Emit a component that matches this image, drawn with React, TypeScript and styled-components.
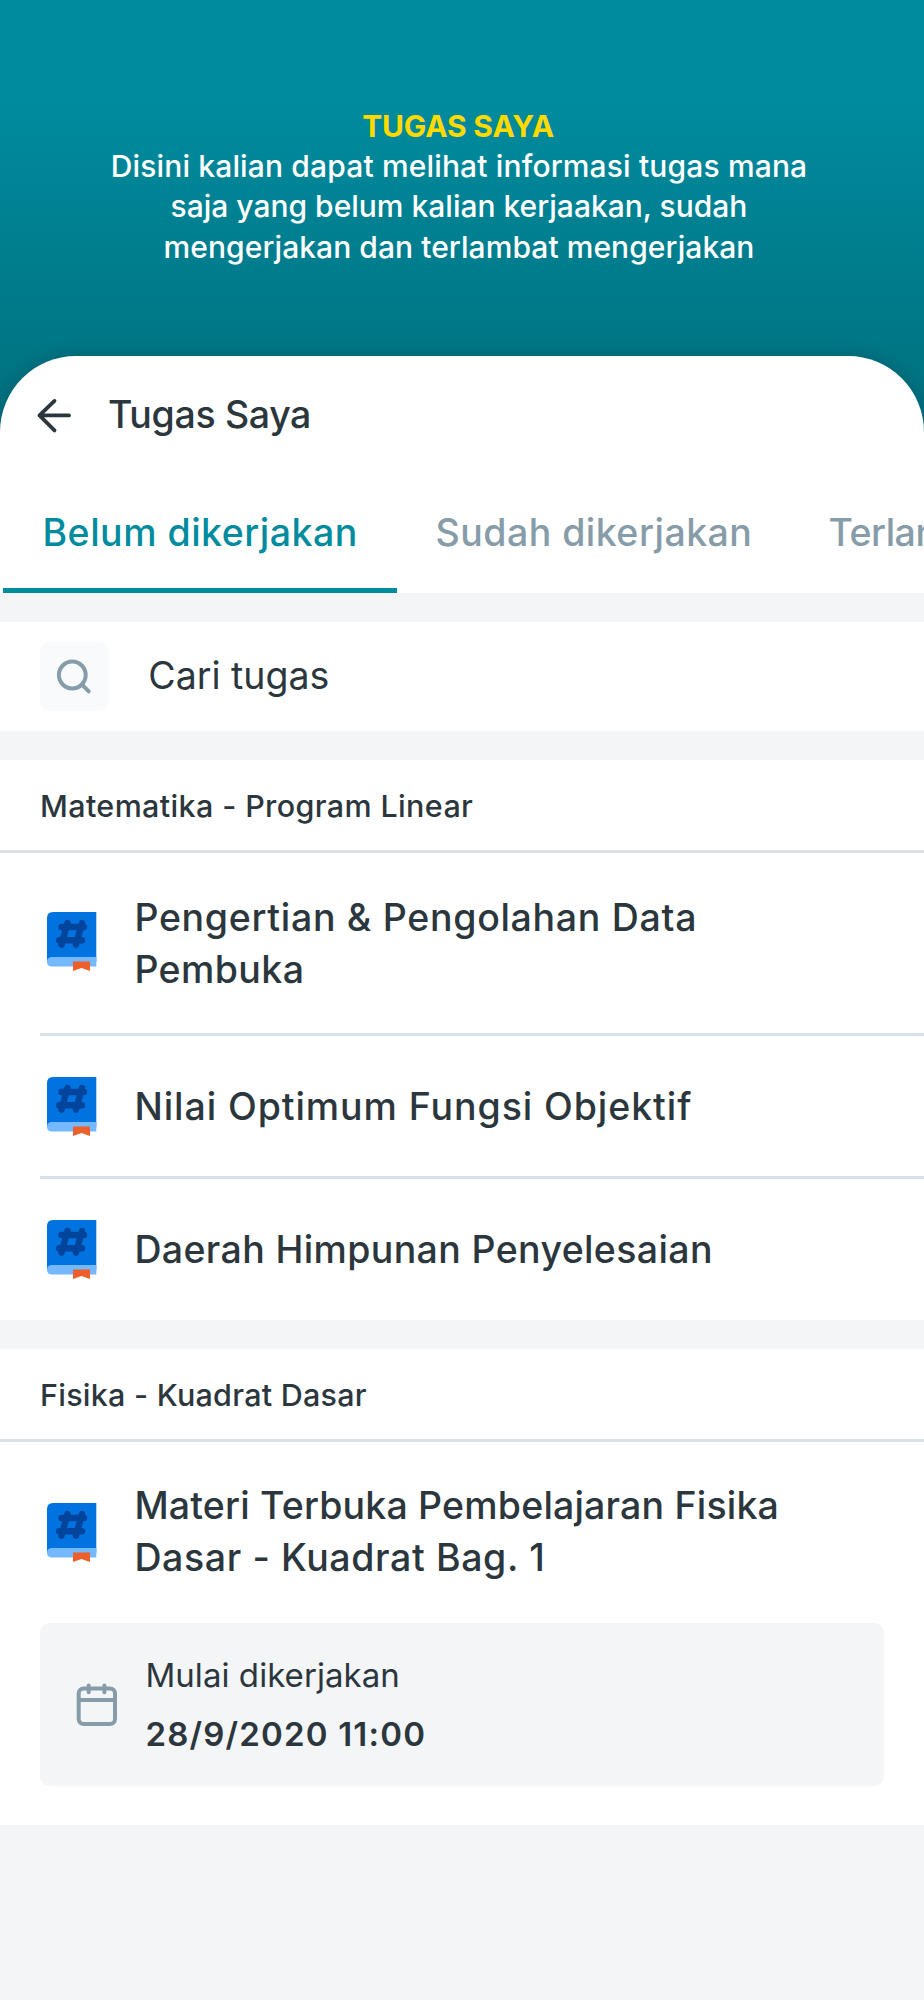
import React from 'react';
import styled, { createGlobalStyle } from 'styled-components';

const color = {
  teal: '#008c9e',
  ink: '#2b363d',
  muted: '#869ca8',
  canvas: '#f3f5f7',
  line: '#d8e1e8',
};

const GlobalStyle = createGlobalStyle`
  * { box-sizing: border-box; }
  body {
    margin: 0;
    background: ${color.canvas};
    font-family: Inter, sans-serif;
    color: ${color.ink};
  }
`;

const Screen = styled.main`
  width: 924px;
  height: 2000px;
  overflow: hidden;
  display: flex;
  flex-direction: column;
  background: ${color.canvas};
`;

const Hero = styled.header`
  flex: none;
  height: 456px;
  padding-top: 106px;
  text-align: center;
  color: #fff;
  background: linear-gradient(180deg, #008c9f 0, #008c9f 90px, #007483 370px, #006e7c 456px);
`;

const HeroTitle = styled.h1`
  margin: 0;
  padding-right: 8px;
  font-size: 30px;
  line-height: 40px;
  font-weight: 700;
  letter-spacing: -0.17px;
  color: #ffd900;
`;

const HeroText = styled.p`
  margin: 0;
  padding-right: 6px;
  font-size: 30px;
  line-height: 40.4px;
  font-weight: 500;
`;

const Line = styled.span<{ $track: number }>`
  display: block;
  white-space: nowrap;
  letter-spacing: ${(p) => p.$track}px;
`;

const Sheet = styled.section`
  flex: none;
  height: 237px;
  margin-top: -100px;
  border-radius: 76px 76px 0 0;
  background: #fff;
  box-shadow: 0 0 16px rgba(0, 50, 60, 0.3);
  clip-path: inset(-20px 0 0 0);
  display: flex;
  flex-direction: column;
`;

const AppBar = styled.div`
  height: 118px;
  padding-left: 36px;
  display: flex;
  align-items: center;
  gap: 35px;
`;

const ScreenTitle = styled.h2`
  margin: 0;
  font-size: 37.5px;
  line-height: 48px;
  font-weight: 500;
  letter-spacing: -0.35px;
`;

const Tabs = styled.nav`
  flex: 1;
  display: flex;
  padding-left: 2.7px;
  overflow: hidden;
`;

const Tab = styled.div<{ $active?: boolean; $track: number }>`
  flex: none;
  width: 394px;
  margin-right: -1px;
  padding: 34px 0 0 39.8px;
  border-bottom: 5px solid ${(p) => (p.$active ? color.teal : 'transparent')};
  color: ${(p) => (p.$active ? color.teal : color.muted)};
  font-size: 37.5px;
  line-height: 50px;
  font-weight: 500;
  letter-spacing: ${(p) => p.$track}px;
  white-space: nowrap;
`;

const SearchBar = styled.div`
  flex: none;
  margin-top: 29px;
  height: 109px;
  padding-left: 40px;
  display: flex;
  align-items: center;
  gap: 39.3px;
  background: #fff;
`;

const SearchBadge = styled.span`
  width: 69px;
  height: 69px;
  border-radius: 10px;
  background: #f9fafc;
  display: flex;
`;

const SearchHint = styled.span`
  padding-bottom: 1px;
  font-size: 37.5px;
  line-height: 48px;
`;

const Group = styled.section`
  flex: none;
  margin-top: 29px;
  background: #fff;
`;

const GroupTitle = styled.h3<{ $track: number }>`
  margin: 0;
  height: 93px;
  padding-left: 40px;
  border-bottom: 3px solid ${color.line};
  font-size: 30.5px;
  line-height: 92px;
  font-weight: 500;
  letter-spacing: ${(p) => p.$track}px;
`;

const Task = styled.article<{ $height: number; $divided?: boolean }>`
  margin-left: 40px;
  height: ${(p) => p.$height}px;
  border-bottom: ${(p) => (p.$divided ? `3px solid ${color.line}` : 'none')};
  padding-left: 7px;
  display: flex;
  align-items: center;
  gap: 37.4px;
`;

const TaskIcon = styled.span<{ $drop: number }>`
  display: flex;
  margin-top: ${(p) => p.$drop}px;
`;

const TaskName = styled.h4`
  margin: 0;
  padding-top: 1px;
  font-size: 37.5px;
  line-height: 51.6px;
  font-weight: 500;
`;

const Schedule = styled.div`
  margin: 0 40px;
  height: 163px;
  padding-left: 35px;
  border-radius: 10px;
  background: ${color.canvas};
  display: flex;
  align-items: center;
  gap: 26.4px;
`;

const ScheduleText = styled.div`
  font-size: 33px;
  line-height: 58.6px;
`;

const ScheduleDate = styled.strong`
  display: block;
  font-weight: 600;
  letter-spacing: 1.2px;
`;

const Spacer = styled.div<{ $height: number }>`
  height: ${(p) => p.$height}px;
`;

const BackIcon = () => (
  <svg width="37" height="38" viewBox="0 0 37 38" fill="none" stroke={color.ink} strokeWidth="3.8" strokeLinecap="round" strokeLinejoin="round">
    <path d="M33 19.4H3.5M18.5 4.9L3.5 19.4L18.5 34.4" />
  </svg>
);

const SearchIcon = () => (
  <svg width="69" height="69" viewBox="0 0 69 69" fill="none" stroke={color.muted} strokeWidth="4" strokeLinecap="round">
    <circle cx="32.3" cy="33" r="13.4" />
    <path d="M42 42.7L48.7 49.4" />
  </svg>
);

const BookIcon = () => (
  <svg width="50" height="60" viewBox="0 0 50 60" fill="none">
    <path d="M6 0H49.3V50H0V6Q0 0 6 0Z" fill="#0073e1" />
    <path d="M5 45H49.3V54.5H5Q0 54.5 0 49.5Q0 45 5 45Z" fill="#74b8ff" />
    <path d="M26 49.5H43V59L34.5 56L26 59Z" fill="#ee5f2b" />
    <path d="M20.5 11L14.5 32.7M35 11L29 32.7M14.5 15H37M12.2 28.3H35" stroke="#00459b" strokeWidth="6.4" strokeLinecap="round" />
  </svg>
);

const CalendarIcon = () => (
  <svg width="44" height="48" viewBox="0 0 44 48" fill="none" stroke={color.muted} strokeWidth="4" strokeLinecap="round">
    <rect x="3.7" y="7.5" width="36.3" height="35.5" rx="5" />
    <path d="M3.7 19.1H40M13.7 4.4V11.2M29.4 4.4V11.2" />
  </svg>
);

type TaskData = { lines: [string, number][]; height: number; drop: number };

const mathTasks: TaskData[] = [
  { lines: [['Pengertian & Pengolahan Data', 0.69], ['Pembuka', 0.4]], height: 183, drop: -2 },
  { lines: [['Nilai Optimum Fungsi Objektif', 0.93]], height: 143, drop: 2 },
  { lines: [['Daerah Himpunan Penyelesaian', 0.36]], height: 141, drop: 1 },
];

const physicsTask: TaskData = {
  lines: [['Materi Terbuka Pembelajaran Fisika', 0.18], ['Dasar - Kuadrat Bag. 1', 0.62]],
  height: 179,
  drop: 3,
};

const TaskRow = ({ task, divided }: { task: TaskData; divided?: boolean }) => (
  <Task $height={task.height} $divided={divided}>
    <TaskIcon $drop={task.drop}><BookIcon /></TaskIcon>
    <TaskName>
      {task.lines.map(([text, track]) => (
        <Line key={text} $track={track}>{text}</Line>
      ))}
    </TaskName>
  </Task>
);

export default function App() {
  return (
    <>
      <GlobalStyle />
      <Screen>
        <Hero>
          <HeroTitle>TUGAS SAYA</HeroTitle>
          <HeroText>
            <Line $track={0.15}>Disini kalian dapat melihat informasi tugas mana</Line>
            <Line $track={0}>saja yang belum kalian kerjaakan, sudah</Line>
            <Line $track={0.06}>mengerjakan dan terlambat mengerjakan</Line>
          </HeroText>
        </Hero>
        <Sheet>
          <AppBar>
            <BackIcon />
            <ScreenTitle>Tugas Saya</ScreenTitle>
          </AppBar>
          <Tabs>
            <Tab $active $track={0.5}>Belum dikerjakan</Tab>
            <Tab $track={0.48}>Sudah dikerjakan</Tab>
            <Tab $track={-0.5}>Terlambat</Tab>
          </Tabs>
        </Sheet>
        <SearchBar>
          <SearchBadge><SearchIcon /></SearchBadge>
          <SearchHint>Cari tugas</SearchHint>
        </SearchBar>
        <Group>
          <GroupTitle $track={0.37}>Matematika - Program Linear</GroupTitle>
          {mathTasks.map((task, i) => (
            <TaskRow key={task.lines[0][0]} task={task} divided={i < mathTasks.length - 1} />
          ))}
        </Group>
        <Group>
          <GroupTitle $track={0.25}>Fisika - Kuadrat Dasar</GroupTitle>
          <TaskRow task={physicsTask} />
          <Spacer $height={2} />
          <Schedule>
            <CalendarIcon />
            <ScheduleText>
              <Line $track={0.06}>Mulai dikerjakan</Line>
              <ScheduleDate>28/9/2020 11:00</ScheduleDate>
            </ScheduleText>
          </Schedule>
          <Spacer $height={39} />
        </Group>
      </Screen>
    </>
  );
}
